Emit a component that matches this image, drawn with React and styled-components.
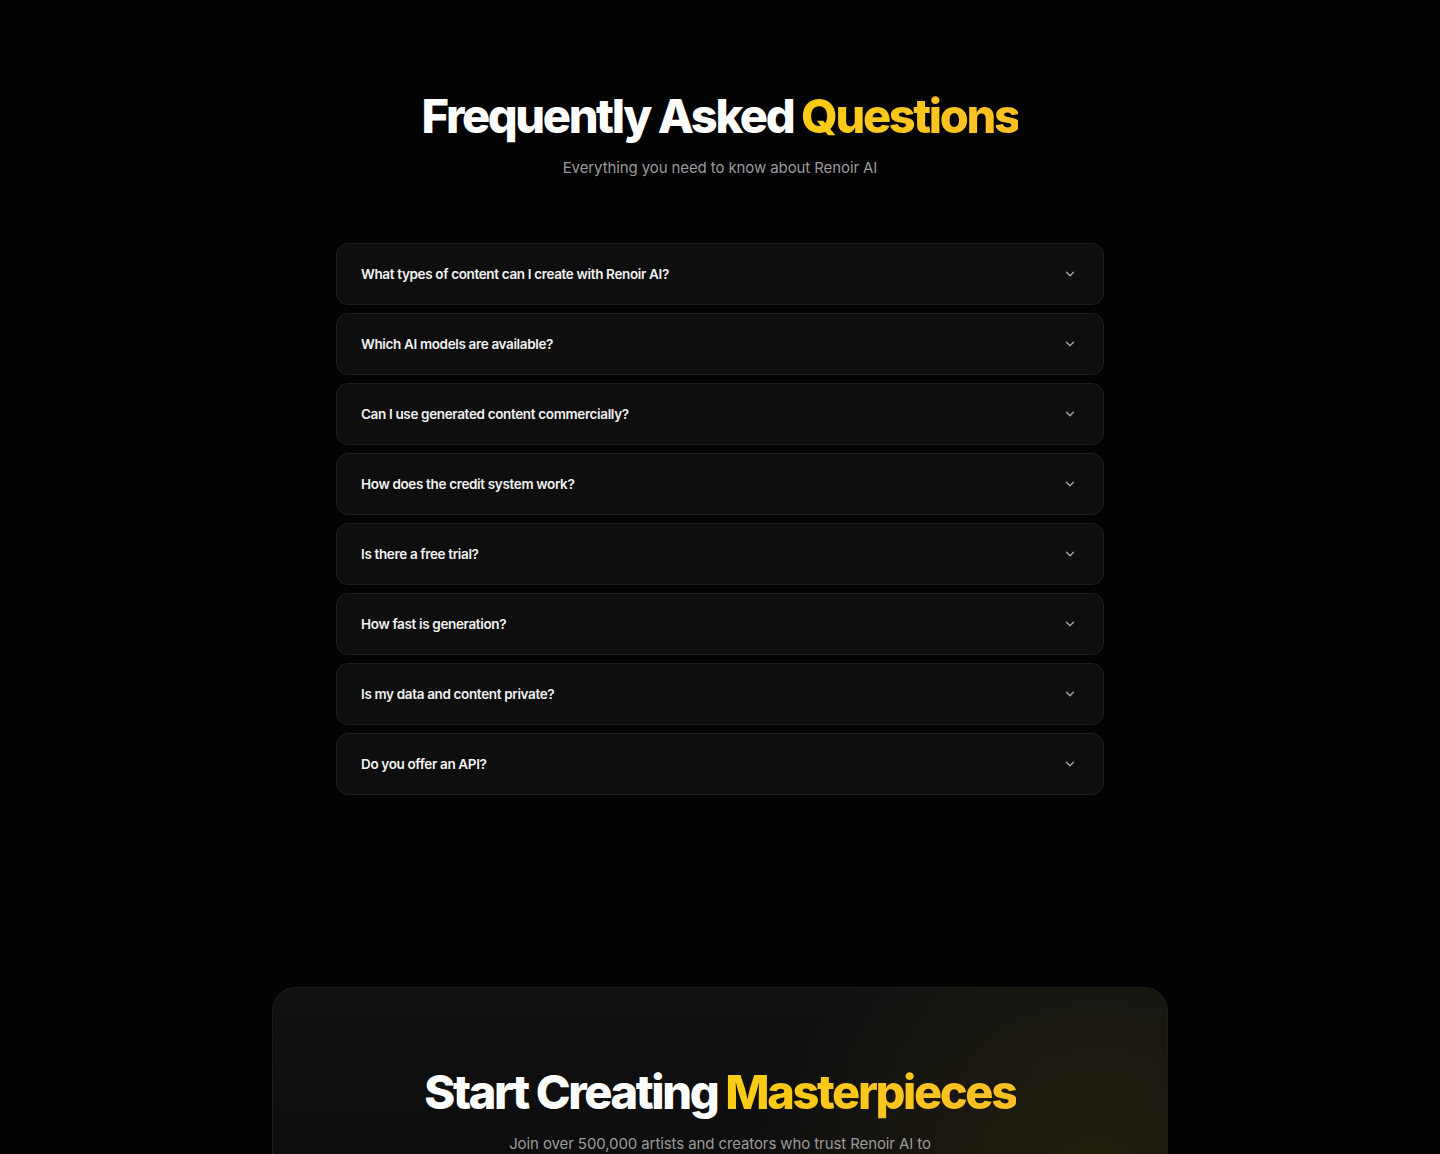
import React from 'react'
import styled, { createGlobalStyle } from 'styled-components'

const GlobalStyle = createGlobalStyle`
  html, body {
    margin: 0;
    padding: 0;
    background: #030303;
  }
  body {
    font-family: 'Inter', 'Lato', sans-serif;
    color: #fff;
  }
  * { box-sizing: border-box; }
`

const Page = styled.div`
  min-height: 1154px;
  background: #030303;
  overflow: hidden;
`

const FaqSection = styled.section`
  display: flex;
  flex-direction: column;
  align-items: center;
  padding: 88px 0 192px;
`

const Title = styled.h2`
  margin: 0;
  font-family: 'Inter', sans-serif;
  font-weight: 800;
  font-size: 47px;
  line-height: 1.2;
  letter-spacing: -2.4px;
  color: #fff;
  text-align: center;
`

const Gold = styled.span`
  background: linear-gradient(90deg, #facc15 0%, #fbbf24 100%);
  -webkit-background-clip: text;
  background-clip: text;
  color: transparent;
`

const Subtitle = styled.p`
  margin: ${p => p.top || 14}px 0 0;
  font-family: 'Inter', sans-serif;
  font-size: 15px;
  color: #9a9a9a;
  letter-spacing: -0.1px;
  text-align: center;
`

const List = styled.div`
  width: 768px;
  margin-top: 66px;
  display: flex;
  flex-direction: column;
  gap: 8px;
`

const Item = styled.div`
  height: 62px;
  display: flex;
  align-items: center;
  justify-content: space-between;
  padding: 0 26px 0 24px;
  background: #0e0e0e;
  border: 1px solid #1f1f1f;
  border-radius: 12px;
`

const Question = styled.span`
  font-family: 'Inter', sans-serif;
  font-size: 13.5px;
  font-weight: 600;
  letter-spacing: -0.35px;
  color: #f2f2f2;
`

const Chevron = styled.svg`
  width: 14px;
  height: 14px;
  color: #a8a8a8;
`

const CtaCard = styled.div`
  width: 896px;
  margin: 0 auto;
  padding: 76px 0 0;
  height: 200px;
  border: 1px solid #1c1c1c;
  border-bottom: none;
  border-radius: 24px 24px 0 0;
  background:
    radial-gradient(ellipse 480px 400px at 92% 100%, rgba(250, 204, 21, 0.09), rgba(250, 204, 21, 0) 72%),
    linear-gradient(180deg, #111111 0%, #0d0d0d 100%);
  display: flex;
  flex-direction: column;
  align-items: center;
`

const questions = [
  'What types of content can I create with Renoir AI?',
  'Which AI models are available?',
  'Can I use generated content commercially?',
  'How does the credit system work?',
  'Is there a free trial?',
  'How fast is generation?',
  'Is my data and content private?',
  'Do you offer an API?',
]

export default function App() {
  return (
    <Page>
      <GlobalStyle />
      <FaqSection>
        <Title>
          Frequently Asked <Gold>Questions</Gold>
        </Title>
        <Subtitle>Everything you need to know about Renoir AI</Subtitle>
        <List>
          {questions.map(q => (
            <Item key={q}>
              <Question>{q}</Question>
              <Chevron viewBox="0 0 24 24" fill="none" stroke="currentColor" strokeWidth="2.2" strokeLinecap="round" strokeLinejoin="round">
                <path d="m6 9 6 6 6-6" />
              </Chevron>
            </Item>
          ))}
        </List>
      </FaqSection>
      <CtaCard>
        <Title>
          Start Creating <Gold>Masterpieces</Gold>
        </Title>
        <Subtitle top={13}>Join over 500,000 artists and creators who trust Renoir AI to</Subtitle>
      </CtaCard>
    </Page>
  )
}
